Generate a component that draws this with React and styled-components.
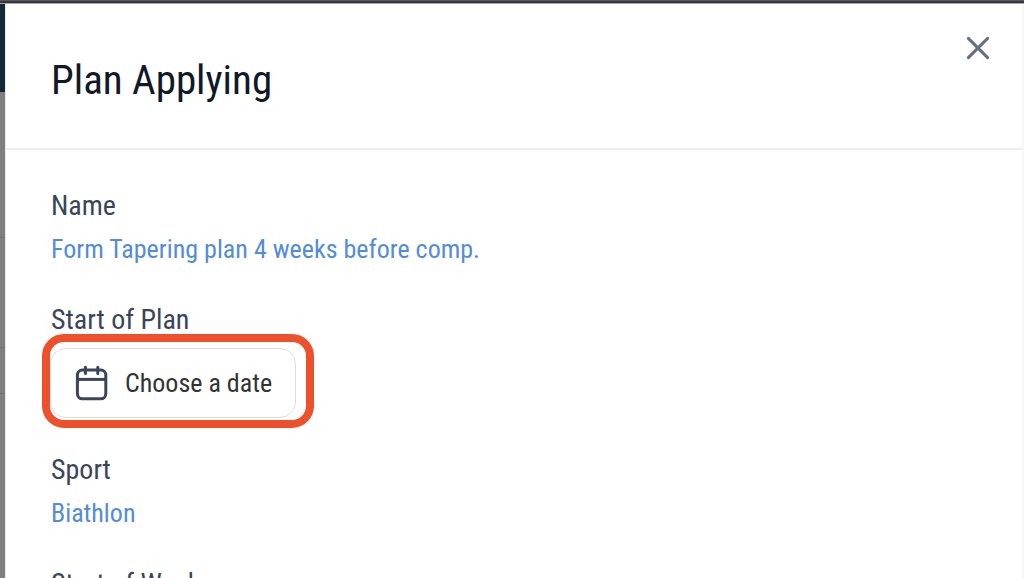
import React from "react";
import styled, { createGlobalStyle } from "styled-components";

const GlobalStyle = createGlobalStyle`
  * {
    box-sizing: border-box;
  }

  body {
    margin: 0;
    overflow: hidden;
    font-family: "Roboto Condensed", Roboto, sans-serif;
  }
`;

const fields = [
  { id: "name", label: "Name", value: "Form Tapering plan 4 weeks before comp." },
  { id: "start", label: "Start of Plan", picker: true },
  { id: "sport", label: "Sport", value: "Biathlon" },
  { id: "week", label: "Start of Week" },
];

const CalendarIcon = () => (
  <svg width="34" height="36" viewBox="0 0 34 36" fill="none" aria-hidden="true">
    <g stroke="#3a455a" strokeWidth="3" strokeLinecap="round">
      <rect x="2.4" y="5" width="28.4" height="28.8" rx="5" />
      <path d="M2.4 14.4H30.8" strokeLinecap="butt" />
      <path d="M10.4 2.2V8.6M22.8 2.2V8.6" />
    </g>
  </svg>
);

const CloseIcon = () => (
  <svg width="24" height="24" viewBox="0 0 24 24" fill="none" aria-hidden="true">
    <path
      d="M2.4 2.4L21.6 21.6M21.6 2.4L2.4 21.6"
      stroke="#667085"
      strokeWidth="3"
      strokeLinecap="round"
    />
  </svg>
);

const App = () => {
  return (
    <Page>
      <GlobalStyle />
      <TopEdge />
      <Content>
        <Backdrop>
          <BackdropNav />
          <BackdropRow $height={146} />
          <BackdropRow $height={110} />
          <BackdropRow $height={46} />
        </Backdrop>
        <Dialog role="dialog" aria-labelledby="dialog-title">
          <Header>
            <Title id="dialog-title">Plan Applying</Title>
            <CloseButton type="button" aria-label="Close">
              <CloseIcon />
            </CloseButton>
          </Header>
          <Body>
            {fields.map(({ id, label, value, picker }) => (
              <Field key={id}>
                <Label id={`${id}-label`}>{label}</Label>
                {picker && (
                  <Highlight>
                    <DateButton type="button" aria-describedby={`${id}-label`}>
                      <CalendarIcon />
                      Choose a date
                    </DateButton>
                  </Highlight>
                )}
                {value && (
                  <ValueLink href="#" aria-describedby={`${id}-label`}>
                    {value}
                  </ValueLink>
                )}
              </Field>
            ))}
          </Body>
        </Dialog>
      </Content>
    </Page>
  );
};

const Page = styled.div`
  display: flex;
  flex-direction: column;
  height: 100vh;
  overflow: hidden;
  background: #fff;
`;

const TopEdge = styled.div`
  flex: none;
  height: 4px;
  background: linear-gradient(#5a585c 0 1px, #39373c 1px 3px, #a5a7ab 3px);
`;

const Content = styled.div`
  display: flex;
  flex: 1;
  min-height: 0;
`;

const Backdrop = styled.div`
  flex: none;
  width: 5px;
  background: #7f7f7f;
`;

const BackdropNav = styled.div`
  height: 88px;
  background: #132a35;
`;

const BackdropRow = styled.div`
  height: ${({ $height }) => $height}px;
  border-bottom: 1px solid #72767c;
`;

const Dialog = styled.section`
  flex: 1;
  min-width: 0;
  background: #fff;
  border-left: 1px solid #e6e8ec;
  border-right: 2px solid #f7f7f8;
`;

const Header = styled.header`
  display: flex;
  justify-content: space-between;
  align-items: flex-start;
  padding: 48px 32px 40px 45px;
  border-bottom: 2px solid #eceef1;
`;

const Title = styled.h1`
  margin: 0;
  font-size: 41px;
  font-weight: 400;
  line-height: 56px;
  color: #111827;
`;

const CloseButton = styled.button`
  display: flex;
  margin-top: -16px;
  padding: 0;
  border: 0;
  background: none;
  cursor: pointer;
`;

const Body = styled.div`
  display: flex;
  flex-direction: column;
  gap: 28px;
  padding: 36px 45px;
`;

const Field = styled.div`
  display: flex;
  flex-direction: column;
  align-items: flex-start;
`;

const Label = styled.span`
  font-size: 28px;
  line-height: 40px;
  color: #3a455a;
`;

const ValueLink = styled.a`
  font-size: 26px;
  line-height: 46px;
  color: #538cd8;
  text-decoration: none;
`;

const Highlight = styled.div`
  margin: -6px 0 -6px -9px;
  padding: 6px 10px 2px 0;
  border: 8px solid #ed512c;
  border-radius: 22px;
`;

const DateButton = styled.button`
  display: flex;
  align-items: center;
  gap: 16px;
  height: 70px;
  padding: 0 23px 0 24px;
  border: 1px solid #dedede;
  border-radius: 16px;
  background: #fff;
  color: #333;
  font-family: inherit;
  font-size: 26px;
  cursor: pointer;
`;

export default App;
